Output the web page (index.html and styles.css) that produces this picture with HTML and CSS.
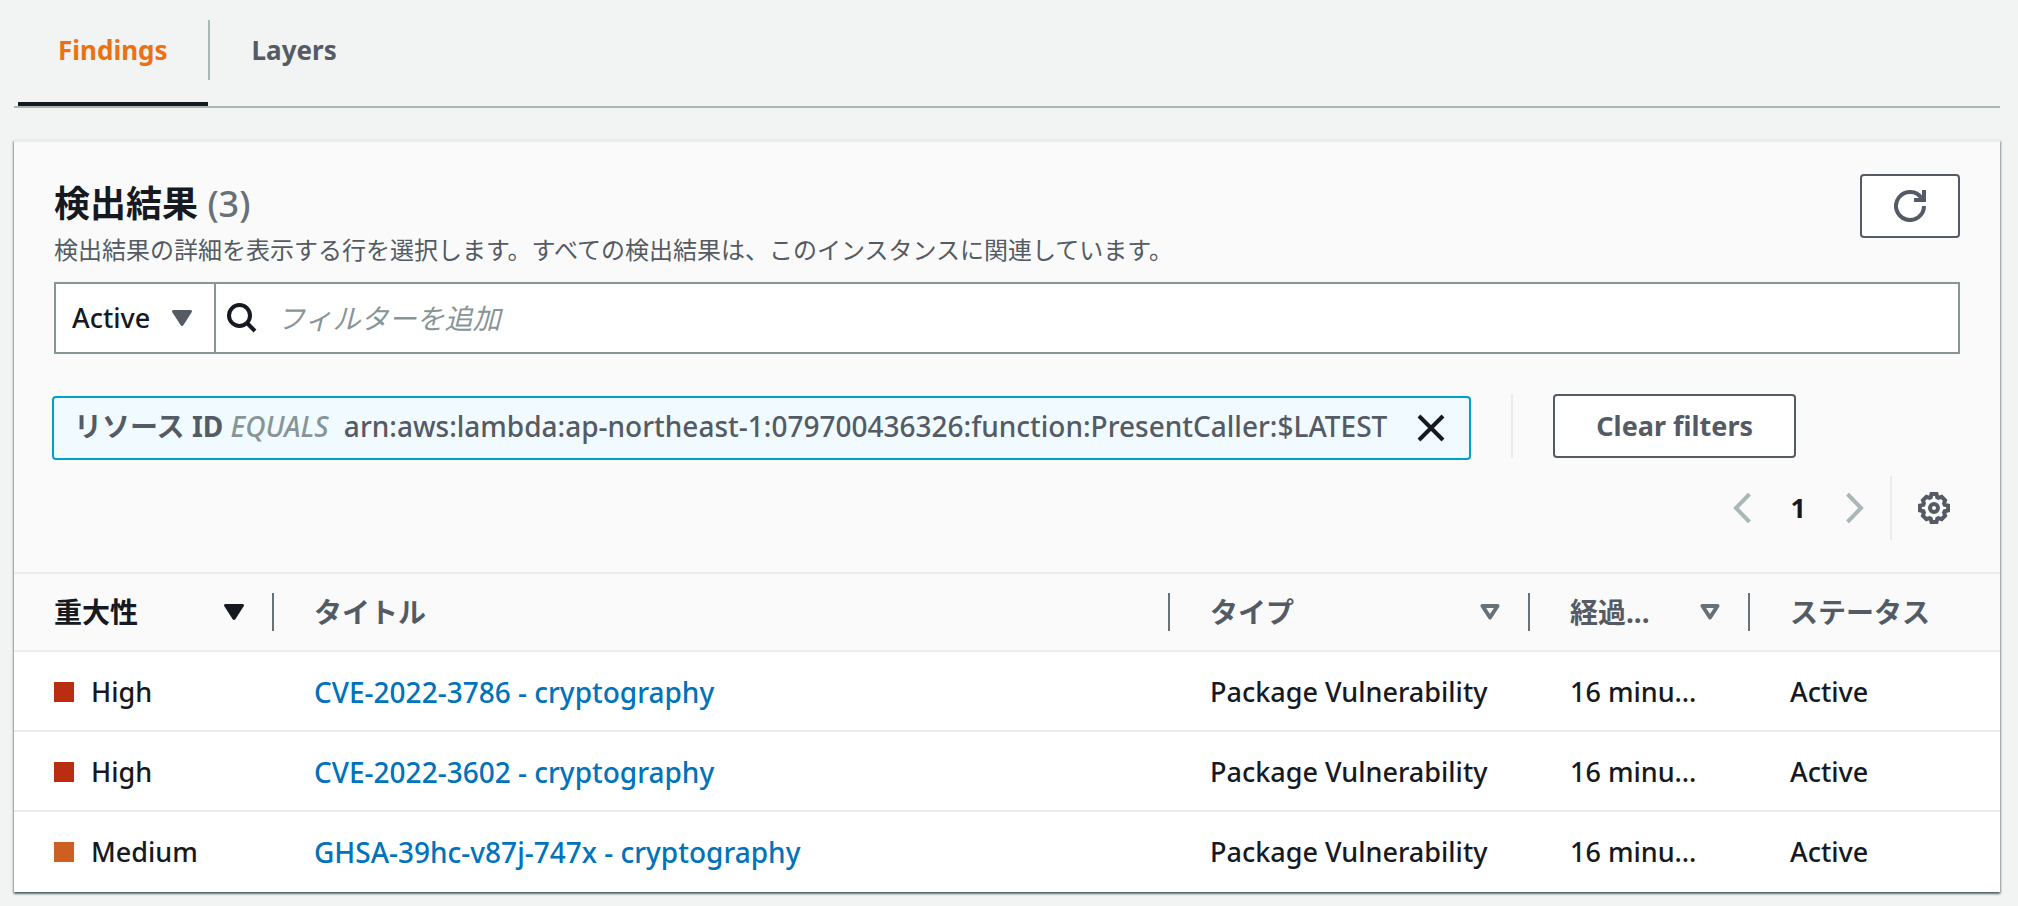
FILE: index.html
```html
<!DOCTYPE html>
<html lang="ja">
<head>
<meta charset="utf-8">
<title>Findings</title>
<link rel="stylesheet" href="styles.css">
</head>
<body>
<main class="page">
  <nav class="tabs" aria-label="Views">
    <a class="tab tab-active" href="#findings" aria-current="page">Findings</a>
    <a class="tab" href="#layers">Layers</a>
  </nav>

  <section class="panel" id="findings">
    <header class="panel-header">
      <div class="title-row">
        <div class="titles">
          <h2 class="title">検出結果 <span class="count">(3)</span></h2>
          <p class="subtitle">検出結果の詳細を表示する行を選択します。すべての検出結果は、このインスタンスに関連しています。</p>
        </div>
        <button class="button button-icon" type="button" aria-label="更新">
          <svg class="icon" viewBox="0 0 32 32" fill="none" stroke="currentColor" stroke-width="4"><path d="M30 16a14 14 0 1 1-2.500-8"/><path d="M30 0v10H20"/></svg>
        </button>
      </div>

      <div class="search">
        <div class="status">
          <select class="status-select" aria-label="ステータス"><option>Active</option></select>
          <svg class="status-arrow" viewBox="0 0 20 16"><path d="M2 0h16q3 0 1.500 2.500L11.500 15q-1.500 2-3 0L.5 2.500Q-1 0 2 0z" fill="currentColor"/></svg>
        </div>
        <label class="filter">
          <svg class="filter-icon" viewBox="0 0 30 30" fill="none" stroke="currentColor" stroke-width="4"><circle cx="12.500" cy="12.500" r="10.500"/><path d="M20 20l8 8"/></svg>
          <input class="filter-input" type="text" placeholder="フィルターを追加" aria-label="フィルターを追加">
        </label>
      </div>

      <div class="tokens">
        <div class="token">
          <span class="token-text"><b>リソース ID</b> <i>EQUALS</i> arn:aws:lambda:ap-northeast-1:079700436326:function:PresentCaller:$LATEST</span>
          <button class="token-close" type="button" aria-label="フィルターを削除"><svg class="close-icon" viewBox="0 0 28 28" fill="none" stroke="currentColor" stroke-width="4"><path d="M2 2l24 24M26 2L2 26"/></svg></button>
        </div>
        <div class="clear">
          <button class="button" type="button">Clear filters</button>
        </div>
      </div>

      <div class="tools">
        <div class="pager">
          <button class="tool" type="button" aria-label="前のページ"><svg class="chevron" viewBox="0 0 18 30" fill="none" stroke="currentColor" stroke-width="4"><path d="M16.500 1L3 15l13.500 14"/></svg></button>
          <button class="tool page-number" type="button" aria-current="page">1</button>
          <button class="tool" type="button" aria-label="次のページ"><svg class="chevron" viewBox="0 0 18 30" fill="none" stroke="currentColor" stroke-width="4"><path d="M1.500 1L15 15 1.500 29"/></svg></button>
        </div>
        <div class="settings">
          <button class="tool tool-dark" type="button" aria-label="設定"><svg class="icon" viewBox="0 0 32 32" fill="none" stroke="currentColor" stroke-width="4"><path d="M13.500 2h5l.8 3.400 1.200.5 3.100-1 3.500 3.500-1 3.100.5 1.200 3.400.8v5l-3.400.8-.5 1.200 1 3.100-3.500 3.500-3.100-1-1.200.5-.8 3.400h-5l-.8-3.400-1.200-.5-3.100 1-3.500-3.500 1-3.100-.5-1.200L2 18.500v-5l3.400-.8.5-1.200-1-3.100 3.500-3.500 3.100 1 1.200-.5z"/><circle cx="16" cy="16" r="4"/></svg></button>
        </div>
      </div>
    </header>

    <table class="table">
      <colgroup><col class="col-severity"><col class="col-title"><col class="col-type"><col class="col-age"><col class="col-status"></colgroup>
      <thead>
        <tr>
          <th class="sorted" scope="col"><div class="head"><span>重大性</span><svg class="sort" viewBox="0 0 20 16"><path d="M2 0h16q3 0 1.500 2.500L11.500 15q-1.500 2-3 0L.5 2.500Q-1 0 2 0z" fill="currentColor"/></svg></div></th>
          <th scope="col"><div class="head"><span>タイトル</span></div></th>
          <th scope="col"><div class="head"><span>タイプ</span><svg class="sort" viewBox="0 0 20 16" fill="none" stroke="#687078" stroke-width="4" stroke-linejoin="round"><path d="M2.500 2h15L10 13.500z"/></svg></div></th>
          <th scope="col"><div class="head"><span>経過...</span><svg class="sort" viewBox="0 0 20 16" fill="none" stroke="#687078" stroke-width="4" stroke-linejoin="round"><path d="M2.500 2h15L10 13.500z"/></svg></div></th>
          <th scope="col"><div class="head"><span>ステータス</span></div></th>
        </tr>
      </thead>
      <tbody>
        <tr><td><span class="severity high">High</span></td><td><a class="link" href="#cve-2022-3786">CVE-2022-3786 - cryptography</a></td><td>Package Vulnerability</td><td>16 minu…</td><td>Active</td></tr>
        <tr><td><span class="severity high">High</span></td><td><a class="link" href="#cve-2022-3602">CVE-2022-3602 - cryptography</a></td><td>Package Vulnerability</td><td>16 minu…</td><td>Active</td></tr>
        <tr><td><span class="severity medium">Medium</span></td><td><a class="link" href="#ghsa-39hc-v87j-747x">GHSA-39hc-v87j-747x - cryptography</a></td><td>Package Vulnerability</td><td>16 minu…</td><td>Active</td></tr>
      </tbody>
    </table>
  </section>
</main>
</body>
</html>
```
FILE: styles.css
```css
* { box-sizing: border-box; }

body {
  margin: 0;
  background: #f2f3f3;
  color: #16191f;
  font-family: "Noto Sans", "Noto Sans CJK JP", sans-serif;
  font-size: 27px;
  line-height: 44px;
}

button, input, select { font: inherit; color: inherit; }
button { cursor: pointer; }
svg { display: block; }

.page { padding: 20px 18px 14px 14px; }

.tabs {
  display: flex;
  gap: 4px;
  border-bottom: 2px solid #aab7b8;
  padding-left: 4px;
}
.tab {
  position: relative;
  padding: 8px 40px 34px;
  color: #545b64;
  font-size: 26px;
  font-weight: 700;
  text-decoration: none;
}
.tab-active { color: #ec7211; }
.tab-active::before {
  content: "";
  position: absolute;
  inset: auto 0 0;
  height: 4px;
  background: #16191f;
}
.tab-active::after {
  content: "";
  position: absolute;
  top: 0;
  right: -2px;
  width: 2px;
  height: 60px;
  background: #aab7b8;
}

.panel {
  margin-top: 32px;
  background: #fff;
  border-top: 2px solid #eaeded;
  box-shadow: 0 2px 2px rgba(0, 28, 36, .5), 1px 1px 2px rgba(0, 28, 36, .25), -1px 1px 2px rgba(0, 28, 36, .25);
}
.panel-header {
  padding: 32px 40px;
  background: #fafafa;
}

.title-row { display: flex; justify-content: space-between; align-items: flex-start; }
.titles { padding-top: 8px; }
.title { margin: 0; font-size: 36px; line-height: 44px; font-weight: 700; }
.count { color: #687078; font-weight: 500; }
.subtitle { margin: 0; color: #545b64; font-size: 24px; line-height: 48px; }

.button {
  height: 64px;
  padding: 0 41px;
  border: 2px solid #545b64;
  border-radius: 4px;
  background: #fff;
  color: #545b64;
  font-weight: 700;
}
.button-icon { padding: 0 32px; }
.icon { width: 32px; height: 32px; }

.search {
  display: flex;
  height: 72px;
  margin-top: 8px;
  border: 2px solid #879596;
  background: #fff;
}
.status { position: relative; width: 160px; border-right: 2px solid #879596; }
.status-select {
  width: 100%;
  height: 100%;
  padding: 0 16px;
  border: 0;
  appearance: none;
  background: transparent;
  font-weight: 500;
}
.status-arrow { position: absolute; right: 22px; top: 26px; width: 20px; height: 16px; color: #545b64; pointer-events: none; }
.filter { display: flex; flex: 1; align-items: center; gap: 18px; padding: 0 11px; }
.filter-icon { width: 30px; height: 30px; }
.filter-input { flex: 1; min-width: 0; border: 0; outline: 0; background: transparent; font-size: 28px; }
.filter-input::placeholder { color: #879596; font-style: italic; opacity: 1; }

.tokens { display: flex; gap: 40px; margin: 40px 0 0 -2px; }
.token {
  display: flex;
  align-items: center;
  gap: 30px;
  height: 64px;
  margin-top: 2px;
  padding: 0 24px 0 20px;
  border: 2px solid #00a1c9;
  border-radius: 4px;
  background: #f1faff;
  color: #545b64;
  font-size: 28px;
  font-weight: 500;
  white-space: nowrap;
}
.token-text { padding-bottom: 4px; }
.token i { margin-right: 8px; color: #879596; }
.token-close { padding: 0; border: 0; background: none; color: #16191f; }
.close-icon { width: 28px; height: 28px; }
.clear { height: 64px; padding-left: 40px; border-left: 2px solid #eaeded; }

.tools { display: flex; justify-content: flex-end; margin-top: 16px; }
.pager { display: flex; align-items: center; gap: 40px; padding-right: 26px; }
.tool { display: block; padding: 0; border: 0; background: none; color: #aab7b8; }
.tool-dark { color: #545b64; }
.page-number { color: #16191f; font-weight: 700; }
.chevron { width: 18px; height: 30px; }
.settings { display: flex; align-items: center; height: 64px; padding: 0 10px 0 26px; border-left: 2px solid #eaeded; }

.table { width: 100%; border-spacing: 0; table-layout: fixed; }
.col-severity { width: 260px; }
.col-type { width: 360px; }
.col-age { width: 220px; }
.col-status { width: 250px; }
.table th, .table td { padding: 0 0 0 40px; text-align: left; white-space: nowrap; }
.table th {
  height: 78px;
  border-top: 2px solid #eaeded;
  background: #fafafa;
  color: #545b64;
  font-size: 28px;
  font-weight: 700;
}
.table .sorted { color: #16191f; }
.head { display: flex; align-items: center; justify-content: space-between; height: 38px; padding-right: 28px; }
th:not(:last-child) .head { border-right: 2px solid #687078; }
.sort { width: 20px; height: 16px; }
.table td { height: 80px; padding-top: 2px; border-top: 2px solid #eaeded; font-weight: 500; }
.table tbody tr:last-child td { height: 82px; border-bottom: 2px solid #fff; }
.severity { display: flex; align-items: center; gap: 17px; }
.severity::before { content: ""; width: 20px; height: 20px; }
.high::before { background: #ba2e0f; }
.medium::before { background: #cc5f21; }
.link { color: #0073bb; font-size: 28px; text-decoration: none; }
```
